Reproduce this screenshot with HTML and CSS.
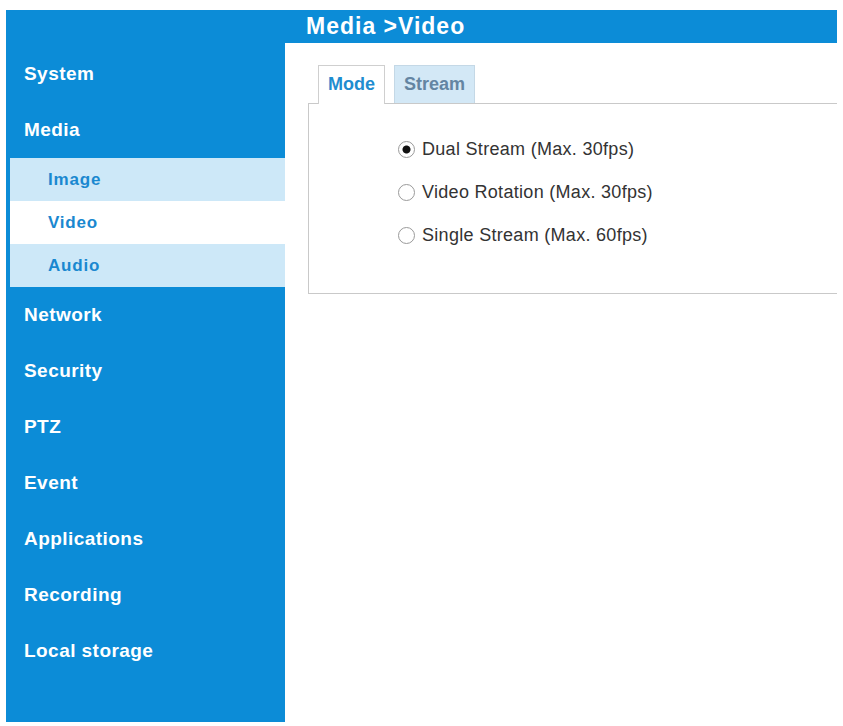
FILE: index.html
```html
<!DOCTYPE html>
<html>
  <head>
    <title>Media &gt; Video</title>
    <meta charset="utf-8" />
    <link rel="stylesheet" href="styles.css">
  </head>
  <body>
    <div class="page">
      <div class="side">
        <ul class="menu">
          <li class="menu-item">System</li>
          <li class="menu-item">Media</li>
          <li class="sub-item">Image</li>
          <li class="sub-item active">Video</li>
          <li class="sub-item">Audio</li>
          <li class="menu-item">Network</li>
          <li class="menu-item">Security</li>
          <li class="menu-item">PTZ</li>
          <li class="menu-item">Event</li>
          <li class="menu-item">Applications</li>
          <li class="menu-item">Recording</li>
          <li class="menu-item">Local storage</li>
        </ul>
      </div>
      <div class="main">
        <div class="title">Media &gt;Video</div>
        <div class="tabs">
          <div class="tab tab-on">Mode</div>
          <div class="tab">Stream</div>
        </div>
        <form class="panel" name="mode">
          <label class="opt">
            <input class="radio" type="radio" name="mode" value="dual" checked />
            Dual Stream (Max. 30fps)
          </label>
          <label class="opt">
            <input class="radio" type="radio" name="mode" value="rotation" />
            Video Rotation (Max. 30fps)
          </label>
          <label class="opt">
            <input class="radio" type="radio" name="mode" value="single" />
            Single Stream (Max. 60fps)
          </label>
        </form>
      </div>
    </div>
  </body>
</html>
```

FILE: styles.css
```css
body {
  margin: 0;
  background: #fff;
  font-family: "Liberation Sans", Arial, sans-serif;
}
.page {
  display: flex;
  width: 831px;
  margin: 10px 0 0 6px;
}
.side {
  width: 279px;
  height: 712px;
  background: #0c8cd7;
}
.menu {
  list-style: none;
  margin: 0;
  padding: 36px 0 0 0;
}
.menu-item {
  height: 56px;
  line-height: 56px;
  padding-left: 18px;
  color: #fff;
  font-size: 19px;
  font-weight: bold;
  letter-spacing: 0.45px;
}
.sub-item {
  height: 43px;
  line-height: 43px;
  margin-left: 4px;
  padding-left: 38px;
  background: #cde8f8;
  color: #1a88d0;
  font-size: 17px;
  font-weight: bold;
  letter-spacing: 0.8px;
}
.sub-item.active {
  background: #fff;
}
.main {
  flex: 1;
}
.title {
  height: 33px;
  line-height: 33px;
  padding-left: 21px;
  background: #0c8cd7;
  color: #fff;
  font-size: 23px;
  font-weight: bold;
  letter-spacing: 1px;
}
.tabs {
  display: flex;
  gap: 9px;
  margin: 22px 0 0 33px;
}
.tab {
  position: relative;
  height: 37px;
  line-height: 37px;
  padding: 0 9px;
  border: 1px solid #c4d8e6;
  border-bottom: none;
  background: #d3e8f6;
  color: #6485a2;
  font-size: 18px;
  font-weight: bold;
}
.tab-on {
  z-index: 1;
  height: 38px;
  margin-bottom: -1px;
  border-color: #cfcfcf;
  background: #fff;
  color: #1f8dd0;
}
.panel {
  display: flex;
  flex-direction: column;
  margin: 0 0 0 23px;
  padding: 24px 0 36px 89px;
  border: 1px solid #c9c9c9;
  border-right: none;
}
.opt {
  display: flex;
  align-items: center;
  gap: 7px;
  height: 43px;
  color: #333;
  font-size: 18px;
  letter-spacing: 0.3px;
}
.radio {
  appearance: none;
  width: 17px;
  height: 17px;
  margin: 0;
  border: 1px solid #9a9a9a;
  border-radius: 50%;
  background: #fff;
}
.radio:checked {
  background: radial-gradient(circle, #111 0, #111 3.5px, #fff 4.5px);
}
```
